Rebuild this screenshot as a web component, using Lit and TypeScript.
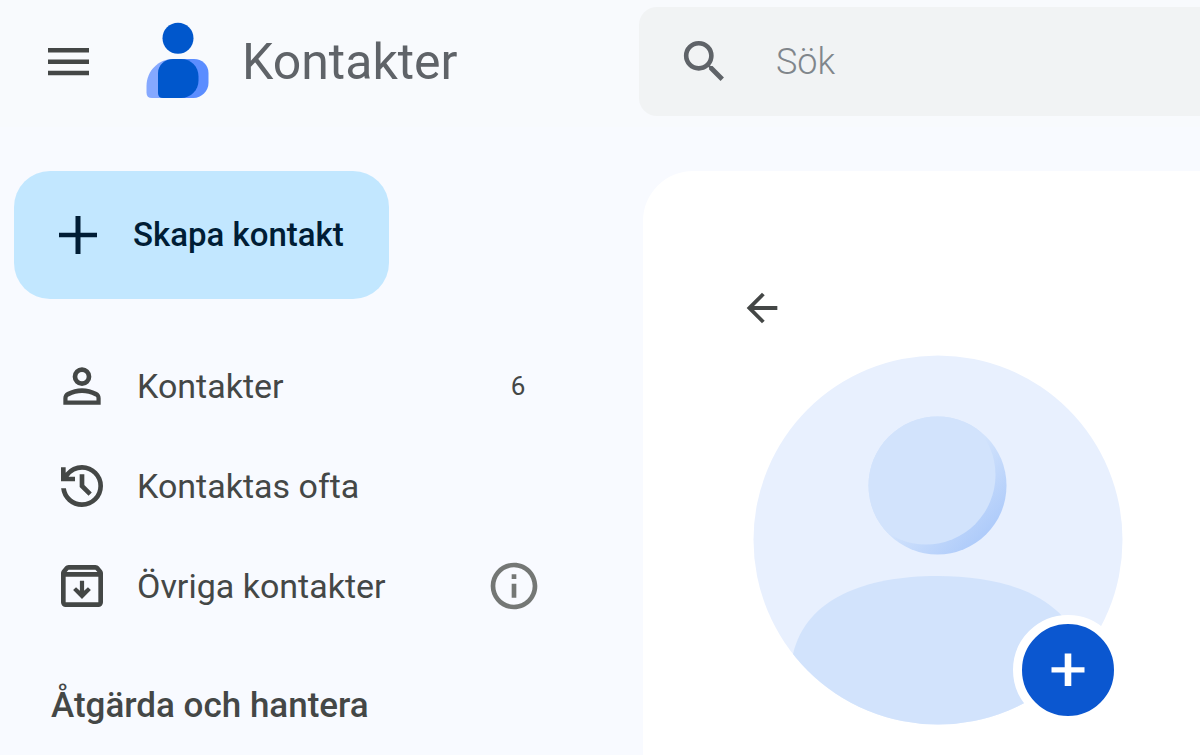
import { LitElement, html, css, svg } from "lit";
import { customElement, state } from "lit/decorators.js";

const personIcon = svg`<path d="M480-480q-66 0-113-47t-47-113q0-66 47-113t113-47q66 0 113 47t47 113q0 66-47 113t-113 47ZM160-160v-112q0-34 17.5-62.5T224-378q62-31 126-46.5T480-440q66 0 130 15.5T736-378q29 15 46.5 43.5T800-272v112H160Zm72-72h496v-40q0-11-5.5-20T700-306q-54-27-109-40.5T480-360q-56 0-111 13.5T260-306q-14 5-21 14t-7 20v40Zm248-328q33 0 56.500-23.500T560-640q0-33-23.500-56.500T480-720q-33 0-56.500 23.500T400-640q0 33 23.500 56.500T480-560Z"/>`;
const historyIcon = svg`<path d="M480-120q-138 0-240.500-91.500T122-440h82q14 104 92.500 172T480-200q117 0 198.500-81.500T760-480q0-117-81.500-198.500T480-760q-69 0-129 32t-101 88h110v80H120v-240h80v94q51-64 124.500-99T480-840q75 0 140.500 28.500t114 77q48.500 48.500 77 114T840-480q0 75-28.500 140.500t-77 114q-48.500 48.500-114 77T480-120Zm112-192L440-464v-216h80v184l128 128-56 56Z"/>`;
const archiveIcon = svg`<path d="m480-258 152-152-50-50-66 62v-172h-72v172l-66-62-50 50 152 152ZM200-640v440h560v-440H200Zm0 520q-33 0-56.500-23.500T120-200v-499q0-14 4.500-27t13.500-24l50-61q11-14 27.500-21.500T250-840h460q18 0 34.500 7.500T772-811l50 61q9 11 13.500 24t4.500 27v499q0 33-23.500 56.500T760-120H200Zm16-600h528l-34-40H250l-34 40Z"/>`;

@customElement("app-root")
export class AppRoot extends LitElement {
  @state() private query = "";

  static styles = css`
    :host {
      display: flex;
      flex-direction: column;
      height: 100vh;
      overflow: hidden;
      background: #f8faff;
      color: #444746;
      font-family: Roboto, "Liberation Sans", sans-serif;
    }
    * {
      box-sizing: border-box;
    }
    button,
    input {
      font: inherit;
      color: inherit;
      border: 0;
      background: none;
      padding: 0;
      margin: 0;
    }
    button {
      cursor: pointer;
    }
    a {
      color: inherit;
      text-decoration: none;
    }
    svg {
      display: block;
      flex: none;
      fill: currentColor;
    }
    .bar {
      display: grid;
      grid-template-columns: 639px 1fr;
      align-items: start;
      padding-bottom: 3px;
      background: #f8fafd;
    }
    .brand {
      display: flex;
      align-items: center;
      height: 124px;
      padding-left: 40px;
      gap: 44px;
    }
    .home {
      display: flex;
      align-items: center;
      gap: 28px;
    }
    .menu {
      color: #444746;
    }
    .title {
      font-size: 50px;
      line-height: 60px;
      color: #5f6368;
    }
    .search {
      display: flex;
      align-items: center;
      gap: 44px;
      height: 109px;
      margin-top: 7px;
      padding-left: 38px;
      border-radius: 18px 0 0 18px;
      background: #f1f3f4;
      color: #5f6368;
    }
    .field {
      flex: 1;
      min-width: 0;
      font-size: 36px;
      line-height: 44px;
      font-weight: 300;
      outline: none;
    }
    .field::placeholder {
      color: #80868b;
      opacity: 1;
    }
    .body {
      display: grid;
      grid-template-columns: 643px 1fr;
      flex: 1;
      min-height: 0;
      padding-top: 44px;
    }
    .side {
      display: flex;
      flex-direction: column;
      align-items: flex-start;
    }
    .create {
      display: flex;
      align-items: center;
      gap: 36px;
      height: 128px;
      margin-left: 14px;
      padding: 0 45px;
      border-radius: 36px;
      background: #c2e7ff;
      color: #001d35;
      font-size: 33px;
      line-height: 40px;
      font-weight: 500;
    }
    .list {
      align-self: stretch;
      list-style: none;
      margin: 37px 0 0;
      padding: 0;
    }
    .item {
      display: flex;
      align-items: center;
      height: 100px;
      padding: 0 101px 0 54px;
    }
    .link {
      display: flex;
      align-items: center;
      flex: 1;
      gap: 27px;
      font-size: 34px;
      line-height: 40px;
    }
    .count {
      width: 48px;
      text-align: center;
      font-size: 26px;
      line-height: 32px;
    }
    .info {
      color: #747775;
    }
    .heading {
      margin: 50px 0 0 51px;
      font-size: 35px;
      line-height: 40px;
      font-weight: 500;
    }
    .main {
      background: #fff;
      border-top-left-radius: 50px;
      padding: 114px 0 0 96px;
    }
    .avatar {
      position: relative;
      width: 370px;
      margin: 20px 0 0 14px;
    }
    .add {
      position: absolute;
      right: 0;
      bottom: 0;
      width: 110px;
      height: 110px;
      border: 9px solid #fff;
      border-radius: 50%;
      background: #0b57d0;
      color: #fff;
      display: grid;
      place-items: center;
    }
  `;

  private symbol(shape: unknown) {
    return html`<svg width="56" height="56" viewBox="0 -960 960 960" aria-hidden="true">${shape}</svg>`;
  }

  render() {
    return html`
      <header class="bar">
        <div class="brand">
          <button class="menu" aria-label="Huvudmeny">
            <svg width="56" height="56" viewBox="0 0 56 56">
              <path d="M8 14h41v4.500H8zM8 25.400h41v4.500H8zM8 36.800h41v4.500H8z" />
            </svg>
          </button>
          <a class="home" href="#">
            <svg width="74" height="80" viewBox="140 22 74 80" aria-hidden="true">
              <path fill="#85a8ff" d="M173 59h14v39h-35q-5.500 0-5.500-5.500V86c0-15 12-27 26.500-27z" />
              <path fill="#5b8dff" d="M178 59h16c8 0 14.500 6 14.500 14v10c0 8-7 15-15 15H178z" />
              <path fill="#0057cc" d="M173 59h8c10 0 17.500 7.500 17.500 17.500v4C198.500 90 191 98 181 98h-18q-5 0-5-5V73c0-8 7-14 15-14z" />
              <circle fill="#0057cc" cx="178" cy="38.300" r="15.500" />
            </svg>
            <span class="title">Kontakter</span>
          </a>
        </div>
        <form class="search" role="search">
          <svg width="55" height="55" viewBox="0 0 24 24" aria-hidden="true">
            <path d="M15.500 14h-.79l-.28-.27A6.471 6.471 0 0 0 16 9.500 6.500 6.500 0 1 0 9.500 16c1.610 0 3.090-.59 4.230-1.570l.27.28v.79l5 4.990L20.490 19l-4.990-5zm-6 0C7.010 14 5 11.990 5 9.500S7.010 5 9.500 5 14 7.010 14 9.500 11.990 14 9.500 14z" />
          </svg>
          <input
            class="field"
            type="text"
            placeholder="Sök"
            aria-label="Sök"
            .value=${this.query}
            @input=${(e: Event) => (this.query = (e.target as HTMLInputElement).value)}
          />
        </form>
      </header>
      <div class="body">
        <nav class="side">
          <button class="create">
            <svg width="38" height="38" viewBox="0 0 38 38" aria-hidden="true">
              <path d="M16.500 0h5v16.800H38v4.400H21.500V38h-5V21.200H0v-4.400h16.500z" />
            </svg>
            Skapa kontakt
          </button>
          <ul class="list">
            <li class="item">
              <a class="link" href="#kontakter">${this.symbol(personIcon)}Kontakter</a>
              <span class="count">6</span>
            </li>
            <li class="item">
              <a class="link" href="#ofta">${this.symbol(historyIcon)}Kontaktas ofta</a>
            </li>
            <li class="item">
              <a class="link" href="#ovriga">${this.symbol(archiveIcon)}Övriga kontakter</a>
              <button class="info" aria-label="Mer information">
                <svg width="56" height="56" viewBox="0 0 24 24">
                  <path d="M11 7h2v2h-2zm0 4h2v6h-2zm1-9C6.480 2 2 6.480 2 12s4.480 10 10 10 10-4.480 10-10S17.520 2 12 2zm0 18c-4.410 0-8-3.590-8-8s3.590-8 8-8 8 3.590 8 8-3.590 8-8 8z" />
                </svg>
              </button>
            </li>
          </ul>
          <h2 class="heading">Åtgärda och hantera</h2>
        </nav>
        <main class="main">
          <button class="back" aria-label="Tillbaka">
            <svg width="46" height="46" viewBox="0 0 24 24">
              <path d="M20 11H7.830l5.590-5.590L12 4l-8 8 8 8 1.410-1.410L7.830 13H20v-2z" />
            </svg>
          </button>
          <div class="avatar">
            <svg width="370" height="370" viewBox="0 0 370 370" role="img" aria-label="Profilbild">
              <defs>
                <clipPath id="disc"><circle cx="185" cy="185" r="184.500" /></clipPath>
                <clipPath id="head"><circle cx="184.500" cy="130.500" r="69" /></clipPath>
                <linearGradient id="shade" gradientUnits="userSpaceOnUse" x1="184" y1="130" x2="234" y2="180">
                  <stop offset="0" stop-color="#d2e3fc" />
                  <stop offset="1" stop-color="#aecbfa" />
                </linearGradient>
              </defs>
              <g clip-path="url(#disc)">
                <path fill="#e8f0fe" d="M0 0h370v370H0z" />
                <path fill="#d2e3fc" d="M40 299C53 243 113 221 184.500 221S316 243 329 299V370H40z" />
              </g>
              <circle fill="url(#shade)" cx="184.500" cy="130.500" r="69" />
              <circle fill="#d2e3fc" cx="173" cy="120" r="69.500" clip-path="url(#head)" />
            </svg>
            <button class="add" aria-label="Lägg till foto">
              <svg width="34" height="34" viewBox="0 0 34 34">
                <path d="M13.700 0.500h6.600v13.700H33.500v5.200H20.300v13.600h-6.600V19.400H0.500v-5.200h13.200z" />
              </svg>
            </button>
          </div>
        </main>
      </div>
    `;
  }
}
